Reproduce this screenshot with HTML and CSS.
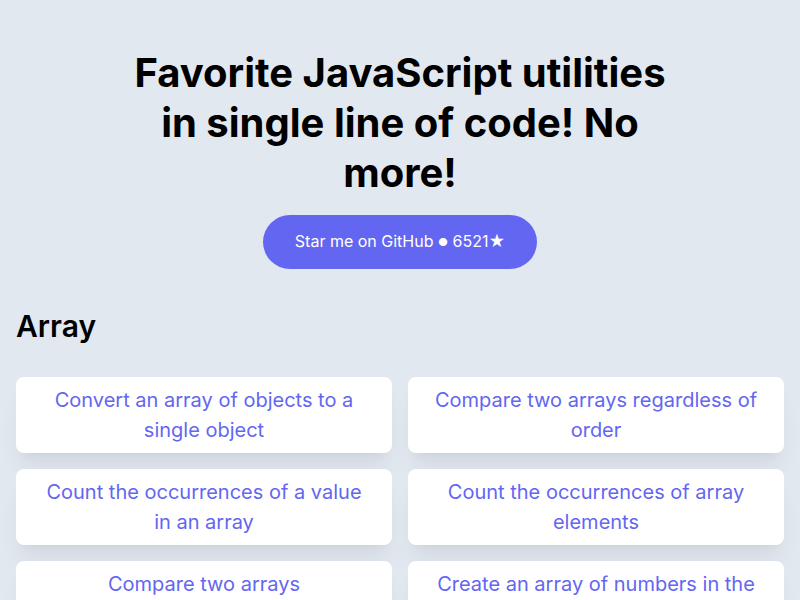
FILE: index.html
```html
<!DOCTYPE html>
<html lang="en">
<head>
<meta charset="utf-8">
<title>1LOC</title>
<link rel="stylesheet" href="styles.css">
</head>
<body>
<header class="hero">
  <h1 class="hero-title">Favorite JavaScript utilities in single line of code! No more!</h1>
  <a class="star-btn" href="#">Star me on GitHub <span class="dot">●</span> 6521★</a>
</header>
<main class="content">
  <section class="category">
    <h2 class="category-title">Array</h2>
    <ul class="grid">
      <li class="card"><a class="card-link" href="#">Convert an array of objects to a single object</a></li>
      <li class="card"><a class="card-link" href="#">Compare two arrays regardless of order</a></li>
      <li class="card"><a class="card-link" href="#">Count the occurrences of a value in an array</a></li>
      <li class="card"><a class="card-link" href="#">Count the occurrences of array elements</a></li>
      <li class="card"><a class="card-link" href="#">Compare two arrays</a></li>
      <li class="card"><a class="card-link" href="#">Create an array of numbers in the given range</a></li>
    </ul>
  </section>
</main>
</body>
</html>
```
FILE: styles.css
```css
* { box-sizing: border-box; }
html, body { margin: 0; padding: 0; }
body {
  background: #e2e8f0;
  font-family: Inter, "Noto Sans", sans-serif;
  color: #000;
}
.hero {
  display: flex;
  flex-direction: column;
  align-items: center;
  padding: 48px 16px 39px;
}
.hero-title {
  margin: 0;
  max-width: 560px;
  font-size: 40px;
  line-height: 50px;
  font-weight: 700;
  text-align: center;
}
.star-btn {
  margin-top: 17px;
  display: inline-block;
  background: #6366f1;
  color: #fff;
  text-decoration: none;
  border-radius: 9999px;
  padding: 16px 32px;
  font-size: 16px;
  line-height: 21px;
}
.dot {
  font-size: 11px;
  vertical-align: 1px;
}
.content { padding: 0 16px; }
.category-title {
  margin: 0 0 33px;
  font-size: 30px;
  line-height: 36px;
  font-weight: 600;
}
.grid {
  list-style: none;
  margin: 0;
  padding: 0;
  display: grid;
  grid-template-columns: 1fr 1fr;
  gap: 16px;
}
.card {
  background: #fff;
  border-radius: 8px;
  box-shadow: 0 20px 25px -5px rgba(0,0,0,0.06), 0 8px 10px -6px rgba(0,0,0,0.05);
  padding: 8px 24px;
  text-align: center;
}
.card-link {
  color: #6366f1;
  text-decoration: none;
  font-size: 20px;
  line-height: 30px;
}
```
